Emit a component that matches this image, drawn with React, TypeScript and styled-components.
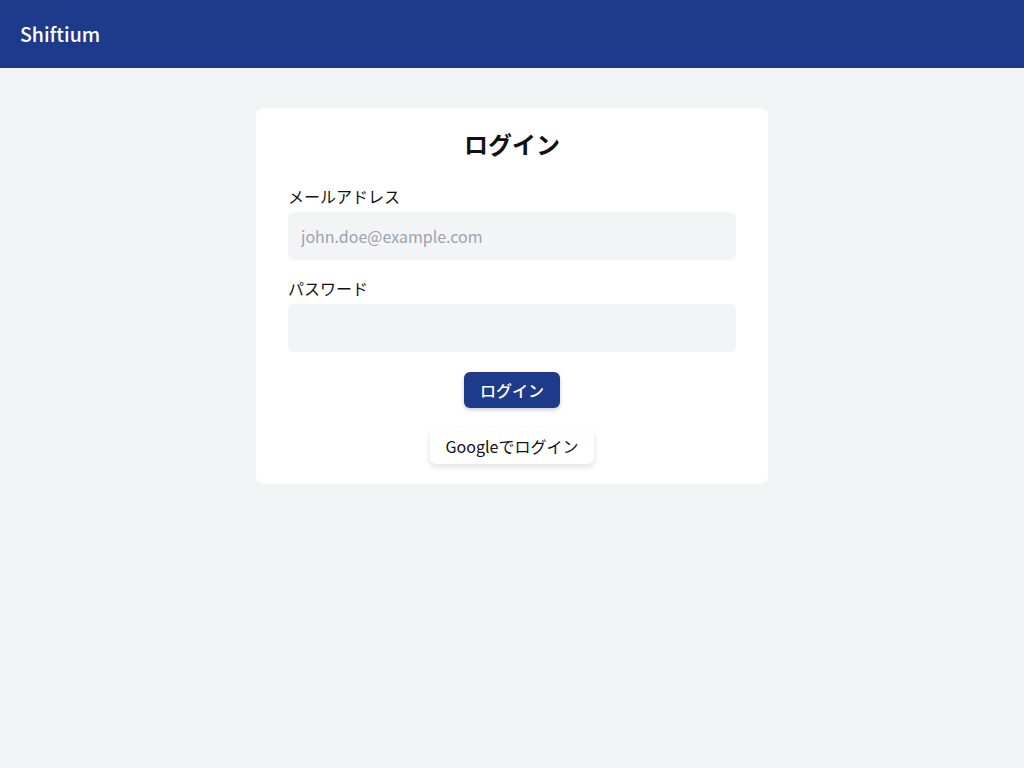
import styled, { createGlobalStyle } from "styled-components";

const GlobalStyle = createGlobalStyle`
  * { box-sizing: border-box; }
  body {
    margin: 0;
    background: #f3f4f6;
    font-family: "Noto Sans CJK JP", "Noto Sans", sans-serif;
    color: #111;
  }
`;

function App() {
  return (
    <>
      <GlobalStyle />
      <Header>
        <Brand>Shiftium</Brand>
      </Header>
      <Main>
        <Card>
          <Title>ログイン</Title>
          <Field>
            <Label>メールアドレス</Label>
            <Input type="email" placeholder="john.doe@example.com" />
          </Field>
          <Field>
            <Label>パスワード</Label>
            <Input type="password" />
          </Field>
          <Actions>
            <PrimaryButton>ログイン</PrimaryButton>
            <GoogleButton>Googleでログイン</GoogleButton>
          </Actions>
        </Card>
      </Main>
    </>
  );
}

export default App;

const Header = styled.header`
  height: 68px;
  background: #1e3a8a;
  display: flex;
  align-items: center;
  padding: 0 20px 2px;
`;

const Brand = styled.h1`
  margin: 0;
  color: #fff;
  font-size: 19.5px;
  font-weight: 500;
`;

const Main = styled.main`
  display: flex;
  justify-content: center;
  padding-top: 40px;
`;

const Card = styled.div`
  width: 512px;
  background: #fff;
  border-radius: 8px;
  padding: 20px 32px;
  display: flex;
  flex-direction: column;
`;

const Title = styled.h2`
  margin: 0 0 24px;
  text-align: center;
  font-size: 24px;
  line-height: 32px;
  font-weight: 700;
`;

const Field = styled.div`
  display: flex;
  flex-direction: column;
  gap: 4px;
  margin-bottom: 16px;
`;

const Label = styled.label`
  font-size: 16px;
  line-height: 24px;
`;

const Input = styled.input`
  height: 48px;
  border: none;
  border-radius: 6px;
  background: #f3f4f6;
  padding: 0 13px;
  font-family: inherit;
  font-size: 16px;
  outline: none;
  &::placeholder {
    color: #9ca3af;
  }
`;

const Actions = styled.div`
  display: flex;
  flex-direction: column;
  align-items: center;
  gap: 20px;
  margin-top: 4px;
`;

const PrimaryButton = styled.button`
  height: 36px;
  padding: 0 16px;
  border: none;
  border-radius: 6px;
  background: #1e3a8a;
  color: #fff;
  font-family: inherit;
  font-size: 16px;
  font-weight: 500;
  box-shadow: 0 2px 4px rgba(0, 0, 0, 0.2);
  cursor: pointer;
`;

const GoogleButton = styled.button`
  height: 36px;
  padding: 0 16px;
  border: none;
  border-radius: 6px;
  background: #fff;
  color: #111;
  font-family: inherit;
  font-size: 16px;
  box-shadow: 0 3px 6px rgba(0, 0, 0, 0.12);
  cursor: pointer;
`;
